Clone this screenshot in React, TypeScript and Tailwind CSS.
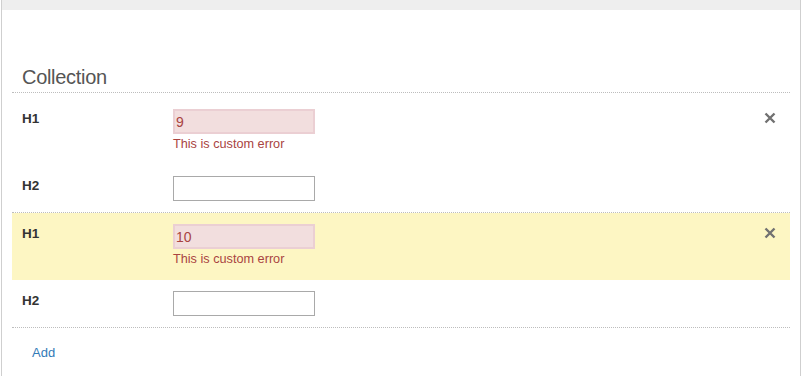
import React from "react";

function XIcon() {
  return (
    <svg width="12" height="12" viewBox="0 0 12 12" className="block">
      <path d="M1.5 1.5 L10.5 10.5 M10.5 1.5 L1.5 10.5" stroke="#717171" strokeWidth="2.4" strokeLinecap="butt" />
    </svg>
  );
}

function Item({ value, highlight, first }: { value: string; highlight?: boolean; first?: boolean }) {
  return (
    <div className="border-b border-dotted border-[#bdbdbd]">
      <div
        className={
          "flex items-start pl-[10px] pr-[14px] pb-[11px] " +
          (first ? "pt-[16px] " : "pt-[11px] ") +
          (highlight ? "bg-[#fdf6c3]" : "")
        }
      >
        <div className="w-[151px] shrink-0 text-[13.5px] font-bold leading-[20px] text-[#333333]">H1</div>
        <div className="flex-1">
          <input
            readOnly
            value={value}
            className="block h-[25px] w-[142px] border-2 border-[#ebcfd3] bg-[#f2dede] pl-[1px] text-[14px] text-[#a94442] outline-none"
          />
          <div className="h-[20px] pt-[2px] text-[12.7px] leading-[16px] text-[#a94442]">This is custom error</div>
        </div>
        <button className="mt-[3px] shrink-0 cursor-pointer">
          <XIcon />
        </button>
      </div>
      <div className="flex items-start py-[11px] pl-[10px] pr-[14px]">
        <div className="w-[151px] shrink-0 text-[13.5px] font-bold leading-[20px] text-[#333333]">H2</div>
        <input
          readOnly
          value=""
          className="block h-[25px] w-[142px] border border-[#a9a9a9] bg-white pl-[2px] text-[14px] outline-none"
        />
      </div>
    </div>
  );
}

export default function App() {
  return (
    <div className="min-h-[376px] bg-white font-['Liberation_Sans',Arial,sans-serif]">
      <div className="ml-px min-h-[376px] w-[800px] border-x border-[#cfcfcf]">
        <div className="h-[10px] bg-[#eeeeee]" />
        <div className="px-[10px]">
          <h2 className="mb-[3px] mt-[55px] pl-[10px] text-[20px] font-normal leading-[24px] tracking-[-0.3px] text-[#555555]">
            Collection
          </h2>
          <div className="border-t border-dotted border-[#bdbdbd]">
            <Item value="9" first />
            <Item value="10" highlight />
          </div>
          <div className="pl-[20px] pt-[12px]">
            <a href="#" className="text-[13px] leading-[20px] text-[#337ab7]">
              Add
            </a>
          </div>
        </div>
      </div>
    </div>
  );
}
